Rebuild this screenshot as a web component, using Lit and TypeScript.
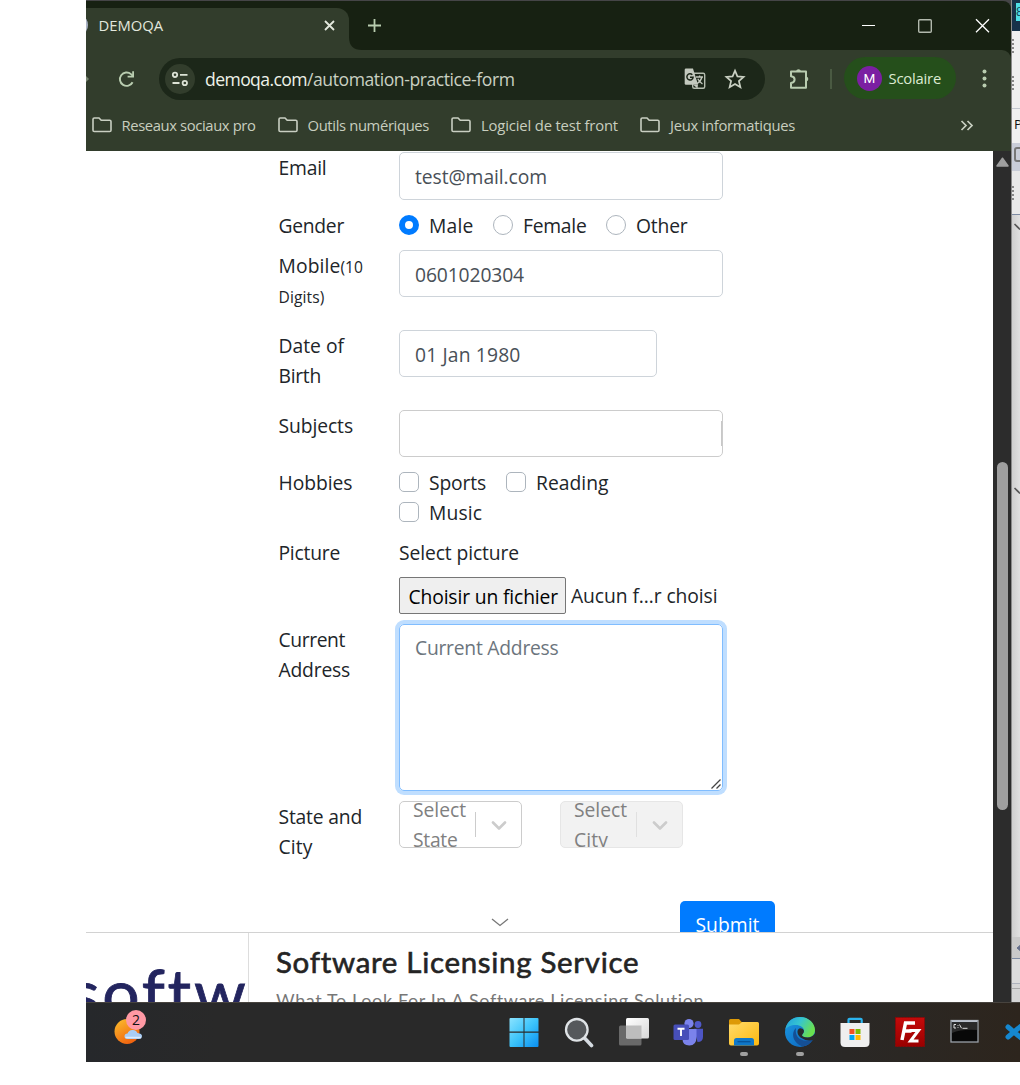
import { LitElement, html, css, svg } from "lit";
import { customElement, property } from "lit/decorators.js";

/* Text whose tracking is adjusted so that it fills the given width. */
@customElement("fit-text")
class FitText extends LitElement {
  @property({ type: Number }) w = 0;
  @property() text = "";
  static styles = css`
    :host { display: inline-block; white-space: pre; }
    .run { display: inline-block; }
  `;
  render() {
    return html`<span class="run">${this.text}</span>`;
  }
  updated() {
    const run = this.renderRoot.querySelector(".run") as HTMLElement;
    run.style.letterSpacing = "0px";
    const natural = run.getBoundingClientRect().width;
    run.style.letterSpacing = `${(this.w - natural) / this.text.length}px`;
  }
}

const t = (text: string, w: number, cls = "") =>
  html`<fit-text class=${cls} .text=${text} .w=${w}></fit-text>`;

const folder = html`<svg class="folder" width="20" height="16" viewBox="0 0 20 16">
  <path d="M1 2.3Q1 1 2.3 1H7L9.2 3.3H17.7Q19 3.3 19 4.6V13.2Q19 14.5 17.7 14.5H2.3Q1 14.5 1 13.2Z" fill="none" stroke="#c9cfc2" stroke-width="1.6"/></svg>`;

@customElement("browser-chrome")
class BrowserChrome extends LitElement {
  static styles = css`
    :host { display: block; height: 151px; background: #454547; font-family: "Open Sans", "Noto Sans", sans-serif; color: #c9d0c2; }
    svg { display: block; flex: none; }
    .frame { margin-top: 0; padding-top: 1px; height: 150px; }
    .titlebar { display: flex; height: 49px; background: #172112; border-radius: 0 8px 0 0; }
    .tab { position: relative; box-sizing: border-box; width: 263px; height: 42px; margin-top: 7px; padding-left: 12.500px; background: #323d2c; border-radius: 0 12px 0 0; display: flex; align-items: center; }
    .tab::before { content: ""; position: absolute; left: -9px; top: 9px; width: 11px; height: 16px; border-radius: 50%; background: #a9b2c4; clip-path: inset(0 0 0 9px); }
    .title { width: 225px; font-size: 14.8px; color: #e3e8dd; margin-top: -8px; }
    .tab svg { margin-top: -8px; }
    .flare { align-self: flex-end; }
    .plus { margin: 18px 0 0 6px; }
    .caption { display: flex; margin-left: auto; margin-top: 17px; gap: 39px; padding-right: 21px; }
    .toolwrap { background: #172112; }
    .tools { display: flex; align-items: center; height: 57px; background: #323d2c; border-radius: 0 9px 0 0; }
    .nib { width: 0; height: 0; border: 3px solid transparent; border-left-color: #76836e; border-right: 0; }
    .reload { margin-left: 29px; }
    .address { display: flex; align-items: center; box-sizing: border-box; width: 606px; height: 42px; margin-left: 24px; padding: 0 19px 0 6px; background: #1c2719; border-radius: 21px; }
    .site { display: grid; place-items: center; width: 30px; height: 30px; border-radius: 50%; background: #323d2c; }
    .url { margin: 1px 0 0 10px; font-size: 17.6px; flex: 1; white-space: nowrap; display: flex; }
    .host { color: #eef2e8; }
    .star { margin-left: 18px; }
    .puzzle { margin-left: 23px; }
    .sep { width: 2px; height: 20px; background: #4a5a42; margin-left: 18px; }
    .profile { display: flex; align-items: center; box-sizing: border-box; width: 112px; height: 42px; margin: -1px 0 0 12px; padding-left: 13px; border-radius: 21px; background: #254f1b; color: #dcebd2; font-size: 14.8px; }
    .avatar { display: grid; place-items: center; width: 25px; height: 25px; margin-right: 6.5px; border-radius: 50%; background: #7b1fa2; color: #fff; font: 13.5px Roboto, sans-serif; }
    .menu { margin-left: 26px; }
    .marks { display: flex; height: 44px; background: #323d2c; border-bottom: 0; padding-left: 5.500px; font-size: 14.8px; color: #c8cebf; }
    .mark { display: flex; align-items: center; height: 36px; gap: 10px; }
    .mark fit-text { margin-top: -1px; }
    .m0 { width: 186px; } .m1 { width: 173.5px; } .m2 { width: 189px; } .m3 { width: 320px; }
    .more { margin-top: 13px; }
  `;
  render() {
    const marks: [string, number][] = [
      ["Reseaux sociaux pro", 134], ["Outils numériques", 121.5], ["Logiciel de test front", 137], ["Jeux informatiques", 125],
    ];
    return html`<div class="frame">
      <div class="titlebar">
        <div class="tab"><div class="title">${t("DEMOQA", 64.5)}</div>
          <svg width="11" height="11" viewBox="0 0 11 11"><path d="M1 1L10 10M10 1L1 10" stroke="#e3e8dd" stroke-width="1.8"/></svg></div>
        <svg class="flare" width="13" height="13" viewBox="0 0 13 13"><path d="M0 0Q0 13 13 13H0Z" fill="#323d2c"/></svg>
        <svg class="plus" width="13" height="13" viewBox="0 0 13 13"><path d="M6.5 0V13M0 6.5H13" stroke="#b9cdb0" stroke-width="1.8"/></svg>
        <div class="caption">
          <svg width="18" height="16" viewBox="0 0 18 16"><path d="M4 7.5H17" stroke="#fff"/></svg>
          <svg width="18" height="16" viewBox="0 0 18 16"><rect x="3.7" y="1.7" width="12.6" height="12.6" rx="1" fill="none" stroke="#b2b9ad" stroke-width="1.4"/></svg>
          <svg width="18" height="16" viewBox="0 0 18 16"><path d="M4 1.3L17 14.3M17 1.3L4 14.3" stroke="#fff" stroke-width="1.3"/></svg>
        </div>
      </div>
      <div class="toolwrap"><div class="tools">
        <div class="nib"></div>
        <svg class="reload" width="17" height="18" viewBox="0 0 17 18"><path d="M14.6 12.2A6.7 6.7 0 1 1 13 4.1L15 6" fill="none" stroke="#b9cdb0" stroke-width="1.9"/><path d="M16 1.2V7.6H9.6V5.8H14.2V1.2Z" fill="#b9cdb0"/></svg>
        <div class="address">
          <div class="site"><svg width="18" height="16" viewBox="0 0 18 16"><g fill="none" stroke="#dde3d6" stroke-width="1.8"><circle cx="4" cy="3.8" r="2.2"/><path d="M9 3.8H16.5M1.5 12H8.5"/><circle cx="13.8" cy="12" r="2.2"/></g></svg></div>
          <div class="url">${t("demoqa.com", 102, "host")}${t("/automation-practice-form", 207.5)}</div>
          <svg width="22" height="22" viewBox="0 0 22 22"><rect x="8.7" y="5.2" width="12" height="15" rx="1.5" fill="none" stroke="#b4bcae" stroke-width="1.4"/>
            <path d="M2 .5H9L14 16.8H2Q.7 16.8 .7 15.500V1.800Q.7.5 2 .5Z" fill="#c3c9be"/><path d="M9.500 17L13.500 20.500L14 16.800Z" fill="#c3c9be"/>
            <path d="M8.300 6.800A3.100 3.100 0 1 0 9.100 9.200H6" fill="none" stroke="#1c2719" stroke-width="1.5"/>
            <path d="M12 9H19M15.600 7.500V9M18 9Q17 13 13 15.800M13.800 10.800Q15.500 14 18.500 16" fill="none" stroke="#c3c9be" stroke-width="1.300"/></svg>
          <svg class="star" width="22" height="22" viewBox="0 0 22 22"><path d="M11 2.600L13.400 8.400L19.600 8.900L14.900 13L16.400 19.200L11 15.900L5.600 19.200L7.100 13L2.400 8.900L8.600 8.400Z" fill="none" stroke="#c9d0c2" stroke-width="1.700"/></svg>
        </div>
        <svg class="puzzle" width="24" height="24" viewBox="0 0 24 24"><path d="M3 4.500H18V20.800H3V16Q6.600 15.600 6.600 12.600Q6.600 9.700 3 9.300Z" fill="none" stroke="#b9cdb0" stroke-width="2" stroke-linejoin="round"/><path d="M8 4.200A2.600 2.600 0 0 1 13 4.200ZM18.500 9.500A2.700 2.700 0 0 1 18.500 14.600Z" fill="#b9cdb0"/></svg>
        <div class="sep"></div>
        <div class="profile"><div class="avatar">M</div>${t("Scolaire", 52.5)}</div>
        <svg class="menu" width="5" height="19" viewBox="0 0 5 19"><g fill="#b9cdb0"><circle cx="2.500" cy="2.500" r="2"/><circle cx="2.500" cy="9.500" r="2"/><circle cx="2.500" cy="16.500" r="2"/></g></svg>
      </div></div>
      <div class="marks">
        ${marks.map(([name, w], i) => html`<div class="mark m${i}">${folder}${t(name, w)}</div>`)}
        <svg class="more" width="14" height="11" viewBox="0 0 14 11"><path d="M1.500 1L6 5.500L1.500 10M7.500 1L12 5.500L7.500 10" fill="none" stroke="#c9d0c2" stroke-width="1.700"/></svg>
      </div>
    </div>`;
  }
}

@customElement("practice-form")
class PracticeForm extends LitElement {
  static styles = css`
    :host { display: block; height: 781px; overflow: hidden; background: #fff; color: #212529; font: 19.3px/30px "Open Sans", "Noto Sans", sans-serif; }
    .form { display: grid; grid-template-columns: 120.500px 326px; grid-template-rows: 58px 40px 80px 80px 57px 70px 87px 177px 100px; padding: 1px 0 0 192.500px; }
    fit-text { display: block; height: 30px; line-height: 32px; }
    .small { font-size: 15.600px; line-height: 34px; }
    .line { display: flex; }
    .input { box-sizing: border-box; width: 324px; height: 47px; border: 1px solid #ced4da; border-radius: 5px; padding: 8px 15px; color: #495057; }
    .tall { height: 48px; }
    .short { width: 258px; }
    .subjects { border-color: #ccc; padding: 10px 0; display: flex; justify-content: flex-end; }
    .sliver { width: 1px; height: 25px; background: #c8c8c8; }
    .choices { display: flex; flex-wrap: wrap; align-content: flex-start; }
    .choice { display: flex; gap: 10px; }
    .box { box-sizing: border-box; width: 20px; height: 20px; margin-top: 5px; border: 1px solid #adb5bd; border-radius: 5px; }
    .radio { border-radius: 50%; }
    .on { border: 6px solid #007bff; }
    .c0 { width: 94px; } .c1 { width: 113px; } .c2 { width: 107px; }
    .h0 { width: 107px; } .h1 { width: 140px; }
    .file { display: flex; margin-top: 10px; align-items: center; gap: 5px; }
    .file > fit-text { line-height: 30px; }
    .choose { box-sizing: border-box; width: 167px; height: 37px; padding: 3px 0 0 8.500px; border: 1px solid #767676; border-radius: 2px; background: #efefef; color: #000; }
    .choose fit-text { line-height: 31px; }
    .area { display: flex; flex-direction: column; justify-content: space-between; box-sizing: border-box; width: 324px; height: 167px; padding: 7px 1px 1px 15px; border: 1px solid #80bdff; border-radius: 5px; box-shadow: 0 0 0 4px #bfdeff; color: #6c757d; }
    .grip { align-self: flex-end; }
    .selects { display: flex; gap: 38px; }
    .select { display: flex; box-sizing: border-box; width: 123px; height: 47px; border: 1px solid #ccc; border-radius: 5px; overflow: hidden; color: #808080; }
    .value { width: 62px; padding-left: 13px; margin-top: -8px; }
    .bar { width: 1px; height: 25px; margin-top: 10px; background: #ccc; }
    .select svg { margin: 19px 0 0 15px; }
    .off { background: #f2f2f2; border-color: #e6e6e6; }
    .off .bar { background: #e0e0e0; }
    .foot { display: flex; justify-content: space-between; width: 689px; }
    .caret { margin: 17px 0 0 404.500px; }
    .submit { width: 95px; height: 48px; border-radius: 5px; background: #007bff; color: #fff; box-sizing: border-box; padding: 8px 15.500px; }
  `;
  private choice(name: string, w: number, cls: string, box = "") {
    return html`<div class="choice ${cls}"><div class="box ${box}"></div>${t(name, w)}</div>`;
  }
  private select(lines: [string, number][], off = "") {
    return html`<div class="select ${off}"><div class="value">${lines.map(([s, w]) => t(s, w))}</div><div class="bar"></div>
      <svg width="16" height="10" viewBox="0 0 16 10"><path d="M2 1.500L8 7.500L14 1.500" fill="none" stroke="#ccc" stroke-width="2.600" stroke-linecap="round" stroke-linejoin="round"/></svg></div>`;
  }
  render() {
    return html`<div class="form">
      <div>${t("Email", 48)}</div><div class="input tall">${t("test@mail.com", 132)}</div>
      <div>${t("Gender", 65.5)}</div>
      <div class="choices">${this.choice("Male", 44.5, "c0", "radio on")}${this.choice("Female", 63.5, "c1", "radio")}${this.choice("Other", 51.5, "c2", "radio")}</div>
      <div><div class="line">${t("Mobile", 62)}${t("(10", 22.5, "small")}</div>${t("Digits)", 46, "small")}</div>
      <div class="input">${t("0601020304", 109)}</div>
      <div>${t("Date of", 65.5)}${t("Birth", 42.5)}</div><div class="input short">${t("01 Jan 1980", 105.5)}</div>
      <div>${t("Subjects", 74.5)}</div><div class="input subjects"><div class="sliver"></div></div>
      <div>${t("Hobbies", 74)}</div>
      <div class="choices">${this.choice("Sports", 57, "h0")}${this.choice("Reading", 72.5, "h1")}${this.choice("Music", 53, "")}</div>
      <div>${t("Picture", 61.5)}</div>
      <div>${t("Select picture", 120)}<div class="file"><div class="choose">${t("Choisir un fichier", 149.5)}</div>${t("Aucun f…r choisi", 146.5)}</div></div>
      <div>${t("Current", 66.5)}${t("Address", 71.5)}</div>
      <div class="area">${t("Current Address", 143.5)}
        <svg class="grip" width="10" height="10" viewBox="0 0 10 10"><path d="M.5 9.500L9.500.5M5.500 9.500L9.500 5.500" stroke="#444" stroke-width="1.300"/></svg></div>
      <div>${t("State and", 83.5)}${t("City", 34)}</div>
      <div class="selects">${this.select([["Select", 53], ["State", 44.5]])}${this.select([["Select", 53], ["City", 34]], "off")}</div>
    </div>
    <div class="foot"><svg class="caret" width="18" height="9" viewBox="0 0 18 9"><path d="M1 1L9 7.500L17 1" fill="none" stroke="#777" stroke-width="1.300"/></svg>
      <div class="submit">${t("Submit", 64)}</div></div>`;
  }
}

@customElement("ad-banner")
class AdBanner extends LitElement {
  static styles = css`
    :host { display: flex; box-sizing: border-box; height: 70px; border-top: 1px solid #d2d2d2; background: #fff; overflow: hidden; font-family: Lato, sans-serif; }
    .logo { box-sizing: border-box; width: 163px; flex: none; overflow: hidden; border-right: 1px solid #ddd; color: #23255f; font-size: 66px; line-height: 74px; padding-top: 22px; }
    .logo fit-text { margin-left: -15px; -webkit-text-stroke: 0.800px #23255f; }
    .copy { padding-left: 27px; }
    .head { font-size: 29.500px; line-height: 36px; margin-top: 11px; color: #242424; -webkit-text-stroke: 0.600px #242424; }
    .sub { font-size: 18px; line-height: 24px; margin-top: 8px; color: #777; }
    fit-text { display: block; }
  `;
  render() {
    return html`<div class="logo">${t("software", 274)}</div>
      <div class="copy"><div class="head">${t("Software Licensing Service", 362.5)}</div>
      <div class="sub">${t("What To Look For In A Software Licensing Solution", 428)}</div></div>`;
  }
}

@customElement("scroll-bar")
class ScrollBar extends LitElement {
  static styles = css`
    :host { display: block; width: 18px; background: #2c2c2c; }
    svg { display: block; margin: 6px 0 0 3px; }
    .thumb { width: 11px; height: 348px; margin: 295px 0 0 4px; border-radius: 6px; background: #9f9f9f; }
  `;
  render() {
    return html`<svg width="13" height="10" viewBox="0 0 13 10"><path d="M6.500 1.200L12 9H1Z" fill="#9f9f9f" stroke="#9f9f9f" stroke-width="1.500" stroke-linejoin="round"/></svg><div class="thumb"></div>`;
  }
}

/* Visible edge of the window that sits behind the browser. */
@customElement("back-window")
class BackWindow extends LitElement {
  static styles = css`
    :host { display: block; box-sizing: border-box; width: 9px; height: 1002px; border-left: 1px solid #8b8b8b; overflow: hidden; background: #d6d6d6; }
    .top { height: 31px; background: #17324a; padding: 3px 0 0 4px; box-sizing: border-box; }
    .badge { width: 4px; height: 18px; background: #4fdfe8; color: #16485a; font: 13px/18px "Liberation Sans", sans-serif; overflow: hidden; }
    .pane { box-sizing: border-box; height: 78px; background: #efefef; border-bottom: 1px solid #c3c8d0; padding: 8px 0 0; }
    .grips { width: 2px; height: 14px; background: repeating-linear-gradient(#888 0 2px, transparent 2px 4px); margin-bottom: 23px; }
    .label { height: 34px; background: #f0f0f0; font: 13.500px/30px "Open Sans", sans-serif; color: #111; padding-left: 2px; }
    .tool { height: 28px; background: #c9cdd8; padding: 4px 0 0 2px; box-sizing: border-box; }
    .dev { width: 14px; height: 15px; border: 2px solid #777; border-radius: 3px; box-sizing: border-box; }
    .row { box-sizing: border-box; height: 44px; padding-top: 15px; background: #e9e9e9; border-bottom: 1px solid #7d8ba3; }
    svg { display: block; }
    .tree { box-sizing: border-box; height: 722px; padding-top: 8px; background: linear-gradient(90deg, #cfcfcf, #e0e0e0); }
    .second { margin-top: 256px; }
    .bar { height: 22px; background: #c9c9c9; border-bottom: 1px solid #7d8ba3; box-sizing: border-box; padding-top: 7px; }
    .out { height: 25px; background: #dcdcdc; border-bottom: 1px solid #aeb3bd; box-sizing: border-box; }
    .last { height: 5px; border-bottom: 1px solid #a8a8a8; box-sizing: border-box; }
  `;
  render() {
    const mark = (cls: string) => html`<svg class=${cls} width="8" height="8" viewBox="0 0 8 8"><path d="M2.500 1L8 6.500" stroke="#555" stroke-width="1.600"/></svg>`;
    return html`<div class="top"><div class="badge">8</div></div>
      <div class="pane"><div class="grips"></div><div class="grips"></div></div>
      <div class="label">P</div><div class="tool"><div class="dev"></div></div>
      <div class="row"><div class="grips"></div></div>
      <div class="tree">${mark("first")}${mark("second")}</div>
      <div class="bar"><svg width="8" height="8" viewBox="0 0 8 8"><path d="M5 4L8 1.500V6.500Z" fill="#66718c" stroke="#66718c"/></svg></div>
      <div class="out"></div><div class="last"></div>`;
  }
}

@customElement("task-bar")
class TaskBar extends LitElement {
  static styles = css`
    :host { display: flex; box-sizing: border-box; height: 60px; overflow: hidden; border-top: 1px solid #47433e; background: linear-gradient(90deg, #26282b, #292929 14%, #292929 75%, #2d251d 100%); }
    .weather { position: relative; width: 410.500px; padding: 14px 0 0 27px; box-sizing: border-box; flex: none; }
    .count { position: absolute; left: 40px; top: 7px; width: 20px; height: 20px; border-radius: 50%; background: #ff99a4; color: #111; font: 14px/20px "Open Sans", sans-serif; text-align: center; }
    .app { display: flex; flex: none; flex-direction: column; align-items: center; width: 55.100px; padding-top: 13px; }
    .dot { width: 8px; height: 4px; border-radius: 2px; background: #a0a0a0; margin-top: 4px; }
    svg { display: block; }
  `;
  render() {
    const icons = [
      svg`<defs><linearGradient id="w" x1="0" y1="0" x2="1" y2="1"><stop offset="0" stop-color="#8be3ff"/><stop offset=".5" stop-color="#3cc4fb"/><stop offset="1" stop-color="#0a8ef0"/></linearGradient></defs>
        <path d="M2.500 2H15.500V15.500H1.500V3Q1.500 2 2.500 2ZM16.500 2H29.500Q30.500 2 30.500 3V15.500H16.500ZM1.500 16.700H15.500V31H2.500Q1.500 31 1.500 30ZM16.500 16.700H30.500V30Q30.500 31 29.500 31H16.500Z" fill="url(#w)"/>`,
      svg`<path d="M21.500 22L28.500 29.500" stroke="#d5dbe1" stroke-width="3.600" stroke-linecap="round"/><circle cx="13.800" cy="13.800" r="10.800" fill="#55585b" stroke="#dfe3e6" stroke-width="2.300"/>`,
      svg`<defs><linearGradient id="v" x1="0" y1="0" x2="1" y2="1"><stop offset="0" stop-color="#fff"/><stop offset="1" stop-color="#d8d8d8"/></linearGradient></defs>
        <rect x="1" y="9.500" width="22.500" height="20" rx="1.500" fill="#696969"/><rect x="8" y="2" width="23" height="20.500" rx="1.500" fill="url(#v)"/><path d="M8 9.500H23.500V22.500H9.500Q8 22.500 8 21Z" fill="#bdbdbd"/>`,
      svg`<circle cx="25" cy="8.500" r="3.400" fill="#5059c9"/><path d="M21 12.800H30V21Q30 26 24.500 26Z" fill="#4d55c4"/><circle cx="16" cy="7.500" r="4.600" fill="#7b83eb"/>
        <path d="M9.500 13H23.500V21Q23.500 29.500 16.300 29.500Q9.500 29.500 9.500 23Z" fill="#7b83eb"/><rect x=".5" y="8.500" width="15.500" height="15.500" rx="1.500" fill="#474fb9"/><path d="M4.500 12.700H11.500M8 12.700V20" stroke="#fff" stroke-width="1.900"/>`,
      svg`<defs><linearGradient id="f" x1="0" y1="0" x2="1" y2="1"><stop offset="0" stop-color="#ffdb6b"/><stop offset="1" stop-color="#fdb90f"/></linearGradient></defs>
        <path d="M1 4.500Q1 3 2.500 3H11L14.500 7H20V14H1Z" fill="#dd9a07"/><path d="M1 8.500H11L14 6H29.500Q31 6 31 7.500V27.500Q31 29.500 29 29.500H3Q1 29.500 1 27.500Z" fill="url(#f)"/>
        <path d="M6 29.500V24.500Q6 22 8.500 22H23.500Q26 22 26 24.500V29.500Z" fill="#0f78c9"/><path d="M9.500 25.700H22.500" stroke="#07549a" stroke-width="1.300"/>`,
      svg`<defs><linearGradient id="e1" x1="0" y1="0" x2="1" y2=".45"><stop offset="0" stop-color="#1f9ee0"/><stop offset=".5" stop-color="#36c5d0"/><stop offset="1" stop-color="#6ae04f"/></linearGradient>
        <linearGradient id="e2" x1="0" y1="0" x2="1" y2="1"><stop offset="0" stop-color="#1c9be3"/><stop offset="1" stop-color="#0b60ba"/></linearGradient></defs>
        <circle cx="16" cy="16" r="15" fill="url(#e2)"/><path d="M1.300 13.500C3 5 9 1 16 1C25 1 31 7.500 31 14C31 19 27.500 21.500 23.500 21.500C20 21.500 18 20.500 18 19.300C18 18 20 17.500 20 14.800C20 11.500 16.500 9 11.500 9C7 9 3 11 1.300 13.500Z" fill="url(#e1)"/>
        <path d="M12 12C8.500 15 8 21 11.500 25.500C14 29 18 30.800 21 30.100C25 28.700 28 25.500 29.300 22.500C26 25 21 25.500 17 23.500C13 21.500 11 17.500 12 12Z" fill="#154f94"/>
        <path d="M20 14.800C20 17.500 18 18 18 19.300C18 20.500 20 21.500 23.500 21.500Q28 21.500 31 17.500V24H29Q22 25.500 16.500 21.500C12 18 13 12.500 16.500 12.300Q19.500 12.500 20 14.800Z" fill="#292b2c"/>`,
      svg`<path d="M9.500 8V4Q9.500 2.800 10.700 2.800H21.500Q22.700 2.800 22.700 4V8" fill="none" stroke="#2cb4ee" stroke-width="2.200"/><path d="M1.500 7H30.500V26.500Q30.500 31 26 31H6Q1.500 31 1.500 26.500Z" fill="#efefef"/>
        <path d="M10.500 13H15.500V18H10.500Z" fill="#f25022"/><path d="M16.500 13H21.500V18H16.500Z" fill="#7fba00"/><path d="M10.500 19H15.500V24H10.500Z" fill="#00a4ef"/><path d="M16.500 19H21.500V24H16.500Z" fill="#ffb900"/>`,
      svg`<defs><linearGradient id="z" x1="0" y1="0" x2="0" y2="1"><stop offset="0" stop-color="#c50a0a"/><stop offset="1" stop-color="#900"/></linearGradient></defs>
        <rect x="1.500" y="1.500" width="29" height="29" fill="url(#z)" stroke="#8d0606" stroke-dasharray="2 1"/><path d="M8 24L11.500 7H21M9.800 15H17.500" fill="none" stroke="#fff" stroke-width="3.500"/><path d="M15.500 14.500H24.500L16.500 25H24.500" fill="none" stroke="#fff" stroke-width="3"/>`,
      svg`<rect x="2" y="4.500" width="27" height="21.500" fill="#080808" stroke="#9aa0a8" stroke-width="1.300"/><path d="M2.500 5.200H28.500" stroke="#b9c0cb" stroke-width="2"/>
        <path d="M3 17Q12.500 13 28 14V7H3Z" fill="#2a2a2a"/><path d="M7 8.500H5V12H7M9 9V9.800M9 11.200V12M10.500 8.500L12.500 12.200M13.500 12.300H18.500" fill="none" stroke="#ddd" stroke-width="1"/>`,
      svg`<path d="M4 11L23 27M4 21L23 5" stroke="#1587cf" stroke-width="5" stroke-linecap="round"/>`,
    ];
    return html`<div class="weather">
        <svg width="32" height="30" viewBox="0 0 32 30"><defs><linearGradient id="s" x1="0" y1="0" x2=".6" y2="1"><stop offset="0" stop-color="#fbc02d"/><stop offset="1" stop-color="#f0620f"/></linearGradient></defs>
          <circle cx="14" cy="14.500" r="12.500" fill="url(#s)"/><path d="M14.500 22Q11.500 22 11.500 19.300Q11.500 16.700 14.500 16.500Q16 12.500 20 13Q23 13 24.500 16Q29 16.500 29 19Q29 22 26 22Z" fill="#a9cdf5"/><path d="M12.500 20.500H28" stroke="#dcebfb" stroke-width="1.500"/></svg>
        <div class="count">2</div></div>
      ${icons.map((icon, i) => html`<div class="app"><svg width="32" height="32" viewBox="0 0 32 32">${icon}</svg>${i === 4 || i === 5 ? html`<div class="dot"></div>` : ""}</div>`)}`;
  }
}

@customElement("app-root")
class AppRoot extends LitElement {
  static styles = css`
    :host { display: block; box-sizing: border-box; width: 1020px; height: 1085px; padding-left: 86px; overflow: hidden; background: #fff; }
    .desk { display: flex; height: 1002px; }
    .browser { width: 925px; flex: none; }
    .view { display: flex; height: 851px; }
    .page { width: 907px; flex: none; }
  `;
  render() {
    return html`<div class="desk">
        <div class="browser"><browser-chrome></browser-chrome>
          <div class="view"><div class="page"><practice-form></practice-form><ad-banner></ad-banner></div><scroll-bar></scroll-bar></div></div>
        <back-window></back-window>
      </div>
      <task-bar></task-bar>`;
  }
}
